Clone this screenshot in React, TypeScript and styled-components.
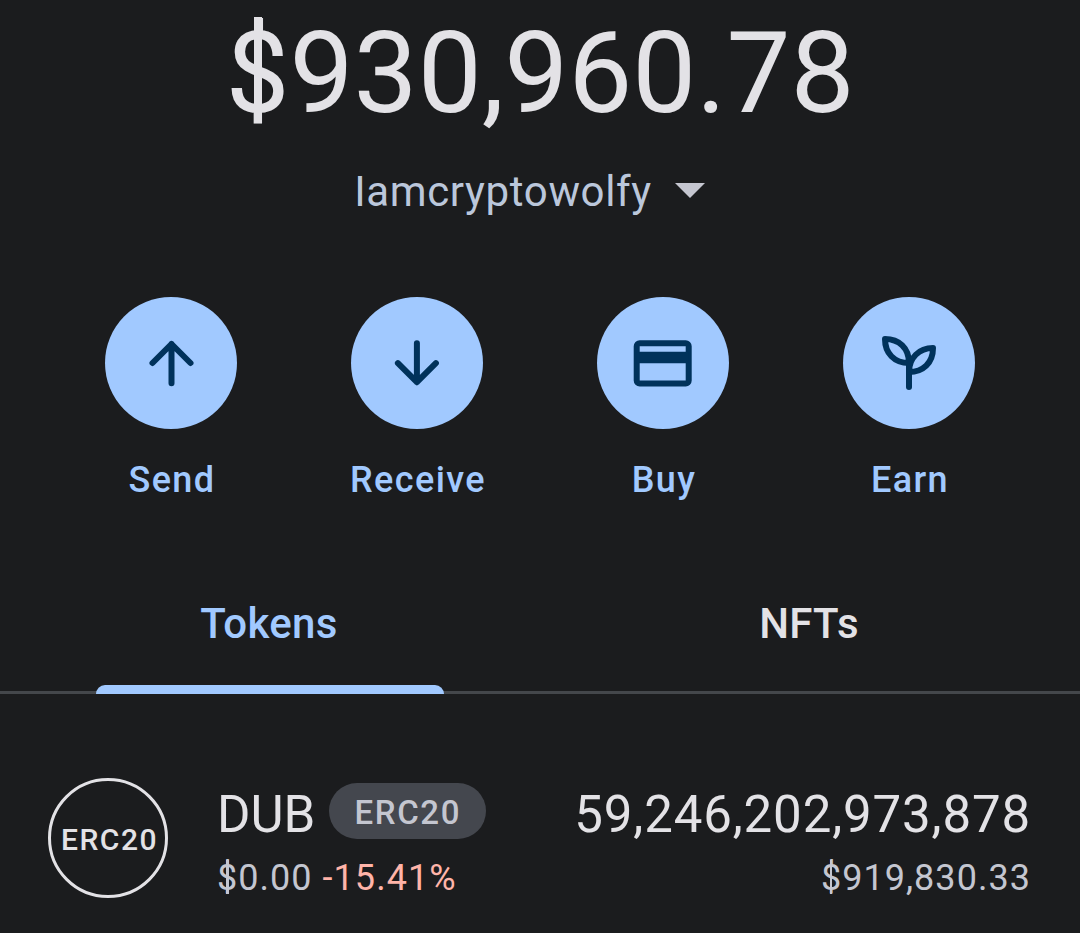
import React from 'react'
import styled, { createGlobalStyle } from 'styled-components'

const GlobalStyle = createGlobalStyle`
  * {
    box-sizing: border-box;
  }

  body {
    margin: 0;
    background: #1b1c1e;
    font-family: Roboto, sans-serif;
  }
`

const Screen = styled.main`
  width: 1080px;
  height: 933px;
  overflow: hidden;
  color: #e3e2e6;
  background: #1b1c1e;
`

const Summary = styled.header`
  display: flex;
  flex-direction: column;
  align-items: center;
  padding-top: 6px;
`

const Balance = styled.div`
  font-size: 114px;
  line-height: 134px;
  white-space: nowrap;
`

// dollar sign with the bar running all the way through
const Dollar = styled.span`
  position: relative;

  &::after {
    content: '';
    position: absolute;
    top: 0.094em;
    left: 0.248em;
    width: 0.075em;
    height: 0.936em;
    background: currentColor;
  }
`

const Account = styled.button`
  display: flex;
  align-items: center;
  gap: 23px;
  margin: 27px 0 0 0;
  padding: 0 21px 0 0;
  border: 0;
  background: none;
  color: #bbc7db;
  font-family: inherit;
  font-size: 42px;
  line-height: 50px;
  letter-spacing: 0.65px;
`

const Caret = styled.svg`
  width: 30px;
  height: 15px;
  margin-bottom: 4px;
  fill: #c5c6d0;
`

const Actions = styled.nav`
  display: grid;
  grid-template-columns: repeat(4, 246px);
  justify-content: center;
  margin-top: 80px;
`

const Action = styled.div`
  display: flex;
  flex-direction: column;
  align-items: center;
  gap: 29px;
  color: #a1c9ff;
`

const ActionLabel = styled.span`
  padding-left: 2px;
  font-size: 36px;
  font-weight: 500;
  line-height: 44px;
  letter-spacing: 1.4px;
`

const ActionCircle = styled.div`
  display: flex;
  align-items: center;
  justify-content: center;
  width: 132px;
  height: 132px;
  border-radius: 50%;
  background: #a1c9ff;
`

const ActionIcon = styled.svg`
  width: 72px;
  height: 72px;
  fill: none;
  stroke: #00325b;
  stroke-width: 6;
  stroke-linecap: round;
  stroke-linejoin: round;
`

const Tabs = styled.div`
  display: grid;
  grid-template-columns: 1fr 1fr;
  height: 140px;
  margin-top: 52px;
  border-bottom: 3px solid #44474b;
`

const Tab = styled.div<{ $active?: boolean }>`
  display: flex;
  flex-direction: column;
  align-items: center;
  justify-content: space-between;
  height: 140px;
  padding-top: 45px;
  color: ${({ $active }) => ($active ? '#a1c9ff' : '#e3e2e6')};
`

const TabLabel = styled.span`
  padding-right: 2px;
  font-size: 42px;
  font-weight: 500;
  line-height: 50px;
  letter-spacing: 0.3px;
`

const Indicator = styled.div`
  width: 348px;
  height: 9px;
  border-radius: 9px 9px 0 0;
  background: #a1c9ff;
`

const TokenRow = styled.div`
  display: flex;
  align-items: flex-start;
  height: 120px;
  margin-top: 84px;
  padding: 0 49px 0 48px;
`

const TokenLogo = styled.div`
  display: flex;
  align-items: center;
  justify-content: center;
  width: 120px;
  height: 120px;
  margin-right: 49px;
  padding: 2px 0 0 3px;
  border: 3px solid #e3e2e6;
  border-radius: 50%;
  font-size: 30px;
  font-weight: 500;
  letter-spacing: 1.5px;
`

const TokenInfo = styled.div`
  flex: 1;
`

const TokenAmounts = styled.div`
  text-align: right;
`

const Primary = styled.div`
  display: flex;
  align-items: center;
  justify-content: flex-end;
  height: 69px;
  padding-top: 5px;
  font-size: 51px;
  line-height: 64px;
  letter-spacing: 0.85px;
`

const TokenName = styled(Primary)`
  justify-content: flex-start;
  gap: 14px;
  letter-spacing: 0;
`

const Badge = styled.span`
  display: flex;
  align-items: center;
  justify-content: center;
  width: 157px;
  height: 56px;
  margin-bottom: 8px;
  padding-top: 3px;
  border-radius: 28px;
  background: #44474e;
  color: #c4c6d0;
  font-size: 33px;
  font-weight: 500;
  letter-spacing: 1.6px;
`

const Secondary = styled.div`
  height: 56px;
  margin-top: 3px;
  color: #c4c6d0;
  font-size: 36px;
  line-height: 56px;
  letter-spacing: 1.04px;
`

const Change = styled.span`
  color: #ffb4a9;
`

const App = () => {
  return (
    <Screen>
      <GlobalStyle />
      <Summary>
        <Balance>
          <Dollar>$</Dollar>930,960.78
        </Balance>
        <Account>
          Iamcryptowolfy
          <Caret viewBox="0 0 30 15">
            <path d="M0 0h30L15 15z" />
          </Caret>
        </Account>
      </Summary>
      <Actions>
        <Action>
          <ActionCircle>
            <ActionIcon viewBox="0 0 72 72">
              <path d="M36.500 56.200V17M17.500 36L36.500 17 55.500 36" />
            </ActionIcon>
          </ActionCircle>
          <ActionLabel>Send</ActionLabel>
        </Action>
        <Action>
          <ActionCircle>
            <ActionIcon viewBox="0 0 72 72">
              <path d="M35.900 16.200V55M16.900 36.200L35.900 55.200 54.900 36.200" />
            </ActionIcon>
          </ActionCircle>
          <ActionLabel>Receive</ActionLabel>
        </Action>
        <Action>
          <ActionCircle>
            <ActionIcon viewBox="0 0 72 72">
              <rect x="9.700" y="16.300" width="52" height="40.300" rx="3" />
              <path d="M9.700 24.700h52v11.600h-52z" fill="#00325b" stroke="none" />
            </ActionIcon>
          </ActionCircle>
          <ActionLabel>Buy</ActionLabel>
        </Action>
        <Action>
          <ActionCircle>
            <ActionIcon viewBox="0 0 72 72">
              <path d="M36 60V35" />
              <path d="M36 36C21 36 12 26 12 12c14 0 24 9 24 24z" />
              <path d="M36 45c14 0 24-9 24-24-14 0-24 10-24 24z" />
            </ActionIcon>
          </ActionCircle>
          <ActionLabel>Earn</ActionLabel>
        </Action>
      </Actions>
      <Tabs>
        <Tab $active>
          <TabLabel>Tokens</TabLabel>
          <Indicator />
        </Tab>
        <Tab>
          <TabLabel>NFTs</TabLabel>
        </Tab>
      </Tabs>
      <TokenRow>
        <TokenLogo>ERC20</TokenLogo>
        <TokenInfo>
          <TokenName>
            DUB
            <Badge>ERC20</Badge>
          </TokenName>
          <Secondary>
            <Dollar>$</Dollar>0.00 <Change>-15.41%</Change>
          </Secondary>
        </TokenInfo>
        <TokenAmounts>
          <Primary>59,246,202,973,878</Primary>
          <Secondary>
            <Dollar>$</Dollar>919,830.33
          </Secondary>
        </TokenAmounts>
      </TokenRow>
    </Screen>
  )
}

export default App
